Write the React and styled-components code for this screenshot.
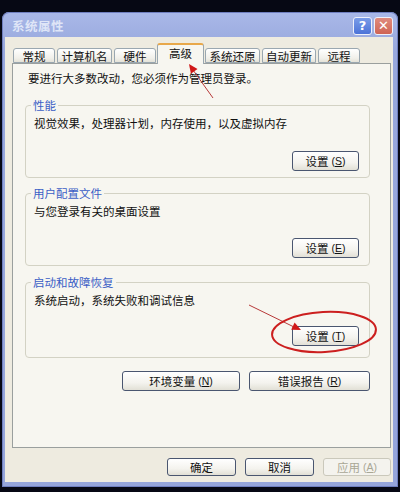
import styled, { createGlobalStyle } from "styled-components";

const GlobalStyle = createGlobalStyle`
  html, body {
    margin: 0;
    padding: 0;
    background: #060814;
  }
  body {
    font-family: "Noto Sans CJK SC", "Noto Sans", sans-serif;
    font-size: 11.5px;
    color: #111;
  }
`;

const Screen = styled.div`
  position: relative;
  width: 400px;
  height: 492px;
  padding: 12px 0 0 2px;
  box-sizing: border-box;
  background: #060814;
  overflow: hidden;
`;

const Window = styled.div`
  width: 396px;
  height: 475px;
  box-sizing: border-box;
  padding: 0 5px 5px 3px;
  border-radius: 7px 7px 0 0;
  background: linear-gradient(#a9b8e8, #97a7dc 40px, #95a5db);
  box-shadow: inset 0 0 0 1px #6f7fc0;
  display: flex;
  flex-direction: column;
`;

const TitleBar = styled.div`
  height: 25px;
  display: flex;
  align-items: center;
  padding: 0 0 0 7px;
  gap: 2px;
`;

const Title = styled.div`
  flex: 1;
  color: #dfe5f7;
  font-weight: bold;
  font-size: 12.5px;
  letter-spacing: 0.5px;
  padding-top: 2px;
`;

const CaptionButton = styled.div`
  width: 19px;
  height: 18px;
  box-sizing: border-box;
  margin-top: 2px;
  border: 1px solid #eef0fb;
  border-radius: 3px;
  display: flex;
  align-items: center;
  justify-content: center;
  color: #fff;
  font-family: "DejaVu Sans", sans-serif;
  font-weight: bold;
  font-size: 13px;
  background: ${(p) =>
    p.$close
      ? "linear-gradient(#e08b7e, #cf6454)"
      : "linear-gradient(#7a9ce8, #4c73d8)"};
`;

const Body = styled.div`
  flex: 1;
  background: #eeebe0;
  padding: 6px 2px 0 7px;
  display: flex;
  flex-direction: column;
`;

const TabRow = styled.div`
  display: flex;
  align-items: flex-end;
  height: 20px;
  margin-left: 1px;
  gap: 2px;
  position: relative;
  z-index: 2;
`;

const Tab = styled.div`
  width: ${(p) => p.$w}px;
  height: ${(p) => (p.$active ? 21 : 15)}px;
  box-sizing: border-box;
  margin: ${(p) => (p.$active ? "0 -1px -1px -1px" : "0")};
  border: 1px solid #9aa7b0;
  border-bottom: ${(p) => (p.$active ? "none" : "1px solid #9aa7b0")};
  border-top: ${(p) => (p.$active ? "2px solid #e8a84a" : "1px solid #9aa7b0")};
  border-radius: 3px 3px 0 0;
  background: ${(p) =>
    p.$active ? "#f7f6f0" : "linear-gradient(#ffffff, #f1f0ea 70%, #e4e2d8)"};
  display: flex;
  justify-content: center;
  align-items: ${(p) => (p.$active ? "flex-start" : "center")};
  line-height: 14px;
  padding-top: ${(p) => (p.$active ? 1 : 0)}px;
  white-space: nowrap;
`;

const Panel = styled.div`
  width: 379px;
  height: 385px;
  box-sizing: border-box;
  border: 1px solid #9a9f9e;
  background: #f7f6f0;
  padding: 7px 0 0 12px;
  position: relative;
  z-index: 1;
`;

const Intro = styled.div`
  margin-left: 3px;
  line-height: 14px;
`;

const Group = styled.div`
  position: relative;
  width: 345px;
  height: ${(p) => p.$h}px;
  box-sizing: border-box;
  margin-top: ${(p) => p.$mt}px;
  border: 1px solid #d3d2c4;
  border-radius: 4px;
  padding: 10px 10px ${(p) => p.$pb}px 8px;
  display: flex;
  flex-direction: column;
  justify-content: space-between;
`;

const Legend = styled.span`
  position: absolute;
  top: -9px;
  left: 5px;
  padding: 0 2px;
  background: #f7f6f0;
  color: #3c5fc6;
  line-height: 16px;
`;

const GroupText = styled.div`
  line-height: 14px;
`;

const ButtonRow = styled.div`
  display: flex;
  justify-content: flex-end;
  gap: ${(p) => p.$gap || 9}px;
  width: ${(p) => (p.$w ? `${p.$w}px` : "auto")};
  margin-top: ${(p) => p.$mt || 0}px;
`;

const Button = styled.div`
  width: ${(p) => p.$w}px;
  height: ${(p) => p.$h || 20}px;
  box-sizing: border-box;
  border: 1px solid ${(p) => (p.$disabled ? "#cac8bb" : "#4a5670")};
  border-radius: 3px;
  background: ${(p) =>
    p.$disabled
      ? "#f4f3ee"
      : "linear-gradient(#ffffff, #f4f3ee 60%, #e2e0d6)"};
  color: ${(p) => (p.$disabled ? "#a9a795" : "#111")};
  display: flex;
  align-items: center;
  justify-content: center;
  line-height: 14px;
  white-space: nowrap;
`;

const Key = styled.span`
  font-family: "Liberation Sans", sans-serif;
  font-size: 10.5px;
  margin-left: 3px;
  u {
    text-underline-offset: 1px;
  }
`;

const Footer = styled.div`
  display: flex;
  justify-content: flex-end;
  gap: 9px;
  width: 379px;
  margin-top: 10px;
`;

const Overlay = styled.svg`
  position: absolute;
  top: 0;
  left: 0;
  z-index: 10;
  pointer-events: none;
`;

const tabs = [
  { label: "常规", w: 42 },
  { label: "计算机名", w: 55 },
  { label: "硬件", w: 42 },
  { label: "高级", w: 47, active: true },
  { label: "系统还原", w: 55 },
  { label: "自动更新", w: 54 },
  { label: "远程", w: 42 },
];

const groups = [
  { title: "性能", text: "视觉效果，处理器计划，内存使用，以及虚拟内存", key: "S", h: 73, mt: 20, pb: 6 },
  { title: "用户配置文件", text: "与您登录有关的桌面设置", key: "E", h: 73, mt: 15, pb: 7 },
  { title: "启动和故障恢复", text: "系统启动，系统失败和调试信息", key: "T", h: 76, mt: 16, pb: 11 },
];

function Label({ text, k }) {
  return (
    <>
      {text}
      {k && (
        <Key>
          (<u>{k}</u>)
        </Key>
      )}
    </>
  );
}

export default function App() {
  return (
    <>
      <GlobalStyle />
      <Screen>
        <Window>
          <TitleBar>
            <Title>系统属性</Title>
            <CaptionButton>?</CaptionButton>
            <CaptionButton $close>✕</CaptionButton>
          </TitleBar>
          <Body>
            <TabRow>
              {tabs.map((t) => (
                <Tab key={t.label} $w={t.w} $active={t.active}>
                  {t.label}
                </Tab>
              ))}
            </TabRow>
            <Panel>
              <Intro>要进行大多数改动，您必须作为管理员登录。</Intro>
              {groups.map((g) => (
                <Group key={g.title} $h={g.h} $mt={g.mt} $pb={g.pb}>
                  <Legend>{g.title}</Legend>
                  <GroupText>{g.text}</GroupText>
                  <ButtonRow>
                    <Button $w={67}>
                      <Label text="设置" k={g.key} />
                    </Button>
                  </ButtonRow>
                </Group>
              ))}
              <ButtonRow $w={345} $mt={13}>
                <Button $w={118}>
                  <Label text="环境变量" k="N" />
                </Button>
                <Button $w={121}>
                  <Label text="错误报告" k="R" />
                </Button>
              </ButtonRow>
            </Panel>
            <Footer>
              <Button $w={69} $h={18}>确定</Button>
              <Button $w={69} $h={18}>取消</Button>
              <Button $w={68} $h={18} $disabled>
                <Label text="应用" k="A" />
              </Button>
            </Footer>
          </Body>
        </Window>
        <Overlay width="400" height="492" viewBox="0 0 400 492">
          <line x1="213" y1="98" x2="193" y2="70" stroke="#b83a3a" strokeWidth="1" />
          <polygon points="189,64 197.5,69.1 190.9,73.7" fill="#d01818" />
          <line x1="249" y1="305" x2="294" y2="327" stroke="#b83a3a" strokeWidth="1" />
          <polygon points="301,330 291.2,329.7 294.6,322.5" fill="#d01818" />
          <ellipse
            cx="324"
            cy="332"
            rx="52"
            ry="20"
            fill="none"
            stroke="#cc1f1f"
            strokeWidth="2"
            transform="rotate(-3 324 332)"
          />
        </Overlay>
      </Screen>
    </>
  );
}
